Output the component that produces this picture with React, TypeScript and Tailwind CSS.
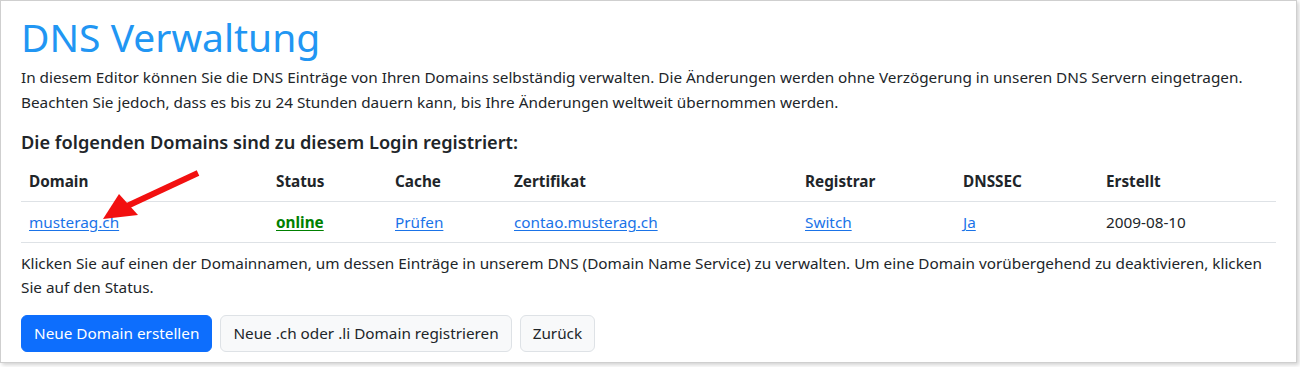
import React from 'react';

const cols = [
  { label: 'Domain', w: 'w-[247px]' },
  { label: 'Status', w: 'w-[119px]' },
  { label: 'Cache', w: 'w-[119px]' },
  { label: 'Zertifikat', w: 'w-[291px]' },
  { label: 'Registrar', w: 'w-[158px]' },
  { label: 'DNSSEC', w: 'w-[143px]' },
  { label: 'Erstellt', w: 'w-[178px]' },
];

const link = 'text-[#1a73e8] underline underline-offset-2';

const App: React.FC = () => {
  return (
    <div className="bg-white w-[1300px] h-[367px] font-['Noto_Sans',sans-serif] text-[#212529]">
      <div className="relative w-[1297px] h-[363px] border border-[#cfcfcf] bg-white shadow-[2px_2px_4px_rgba(0,0,0,0.18)] px-5 pt-[10px]">
        <h1 className="text-[39px] leading-[52px] text-[#2196f3] font-normal">DNS Verwaltung</h1>
        <p className="text-[15.3px] leading-[25px] mt-[2px]">
          In diesem Editor können Sie die DNS Einträge von Ihren Domains selbständig verwalten. Die Änderungen werden ohne Verzögerung in unseren DNS Servern eingetragen. Beachten Sie jedoch, dass es bis zu 24 Stunden dauern kann, bis Ihre Änderungen weltweit übernommen werden.
        </p>

        <h2 className="text-[18.2px] leading-[26px] font-semibold mt-[14px]">Die folgenden Domains sind zu diesem Login registriert:</h2>

        <table className="table-fixed w-[1255px] mt-[6px] text-[15.3px] border-collapse">
          <thead>
            <tr className="border-b border-[#dee2e6]">
              {cols.map((c) => (
                <th key={c.label} className={`${c.w} text-left font-bold px-2 py-2 leading-6`}>
                  {c.label}
                </th>
              ))}
            </tr>
          </thead>
          <tbody>
            <tr className="border-b border-[#dee2e6]">
              <td className="px-2 py-2 leading-6"><a className={link}>musterag.ch</a></td>
              <td className="px-2 py-2 leading-6"><a className="text-[#008000] font-bold underline underline-offset-2">online</a></td>
              <td className="px-2 py-2 leading-6"><a className={link}>Prüfen</a></td>
              <td className="px-2 py-2 leading-6"><a className={link}>contao.musterag.ch</a></td>
              <td className="px-2 py-2 leading-6"><a className={link}>Switch</a></td>
              <td className="px-2 py-2 leading-6"><a className={link}>Ja</a></td>
              <td className="px-2 py-2 leading-6">2009-08-10</td>
            </tr>
          </tbody>
        </table>

        <p className="text-[15.3px] leading-[24px] mt-[8px] w-[1255px]">
          Klicken Sie auf einen der Domainnamen, um dessen Einträge in unserem DNS (Domain Name Service) zu verwalten. Um eine Domain vorübergehend zu deaktivieren, klicken Sie auf den Status.
        </p>

        <div className="flex gap-2 mt-[16px] text-[15.3px]">
          <button className="h-[37px] px-3 rounded-md bg-[#0d6efd] text-white border border-[#0d6efd]">Neue Domain erstellen</button>
          <button className="h-[37px] px-3 rounded-md bg-[#f8f9fa] border border-[#dee2e6] text-[#212529]">Neue .ch oder .li Domain registrieren</button>
          <button className="h-[37px] px-3 rounded-md bg-[#f8f9fa] border border-[#dee2e6] text-[#212529]">Zurück</button>
        </div>

        <svg className="absolute left-0 top-0 pointer-events-none" width="300" height="260" viewBox="0 0 300 260">
          <line x1="197" y1="172" x2="124" y2="206" stroke="#f21010" strokeWidth="6" strokeLinecap="butt" />
          <polygon points="102,218 118,193 137,214" fill="#f21010" />
        </svg>
      </div>
    </div>
  );
};

export default App;
